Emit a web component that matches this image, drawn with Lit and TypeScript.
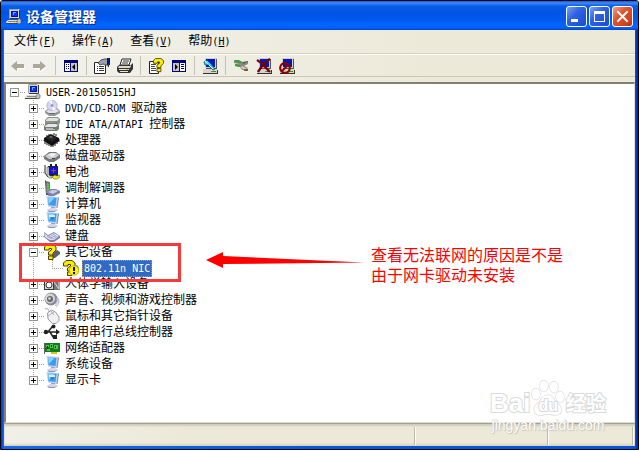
import { LitElement, html, svg, css, nothing, TemplateResult } from "lit";
import { customElement, property } from "lit/decorators.js";

const monitor = svg`
  <path d="M4 0h9l1 1v8l-1 1H4L3 9V1z" fill="#d9d6cc"/><path d="M3 1l1-1h8v1H4v8H3z" fill="#a5a196"/>
  <path d="M13 1h1v9H4v-1h9z" fill="#333"/><path d="M5 2h7v6H5z" fill="#0010a8"/><path d="M6 3h5v4H6z" fill="#1030ff"/>
  <path d="M7 3h3v1H8v2H7z" fill="#50b8ff"/>`;
const computer = svg`${monitor}
  <path d="M2 11h11l1 1v2H0v-1z" fill="#dedbd0"/><path d="M0 14h14v1H0z" fill="#444"/>
  <path d="M2 12h9v1H2z" fill="#888"/><path d="M13 9l2 2v3l-2 1-2-1v-2z" fill="#c4c1b8" stroke="#555" stroke-width=".6"/>`;
const scanBase = svg`
  <path d="M3 0h12v10H3z" fill="#d4d0c8"/><path d="M14 1h1v10H4v-1h10z" fill="#555"/><path d="M4 1h9v8H4z" fill="#0018c0"/>
  <path d="M1 11h13l1 1v3H1z" fill="#d8d5ca"/><path d="M1 15h15v1H1zM15 12h1v3h-1z" fill="#333"/><path d="M9 13h3v1H9z" fill="#777"/>
  <path d="M11 13h3v1h-3z" fill="#0a0"/>`;
const question = svg`
  <path d="M.5 6V3l2.500-2.500h6L12 3v3L9 9v2H4.500V8L7.500 6V4.500H5V6z" fill="#ffec00" stroke="#4a4300"/>
  <path d="M4.500 12h4.500v3.500H4.500z" fill="#ffec00" stroke="#4a4300"/>`;
const lcd = svg`
  <path d="M2.500 0L14 1l-1.500 11-8.500-1.500z" fill="#b5d2f2"/><path d="M4 1l8.500 1-1 8-7-1z" fill="#3c9cee"/><path d="M4 1l6.500.8L5 8z" fill="#8bd0fb"/>
  <path d="M14 1l1 1-1.500 10h-1z" fill="#7f82b8"/><path d="M7 11h4v2H7z" fill="#9ea0c8"/><path d="M3 14l3-2h5l3 2-4 2H5z" fill="#d4d5e6"/>
  <path d="M3 14l2 2h5l4-2-4 1H6z" fill="#8b8db3"/>`;

const icons: Record<string, TemplateResult> = {
  computer,
  back: svg`<path d="M2 8l6-5v3h7v4H8v3z" fill="#aca899"/><path d="M8 13v-3h7V9l1 1v1H9v3z" fill="#fff"/>`,
  forward: svg`<path d="M14 8L8 3v3H1v4h7v3z" fill="#aca899"/><path d="M15 8l-6 6-1-1V11H2v-1h6v3z" fill="#fff"/>`,
  treePane: svg`<path d="M1 2h14v12H1z" fill="#000080"/><path d="M2 5h5v8H2z" fill="#fff"/><path d="M8 5h6v8H8z" fill="#c8c5b8"/>
    <path d="M3 6h1v1H3zM3 8h1v1H3zM3 10h1v1H3zM5 6h1v1H5zM5 8h1v1H5zM5 10h1v1H5z" fill="#000080"/><path d="M12 6v6L9 9z" fill="#000"/>`,
  listPane: svg`<path d="M1 2h14v12H1z" fill="#000080"/><path d="M9 5h5v8H9z" fill="#fff"/><path d="M2 5h6v8H2z" fill="#c8c5b8"/>
    <path d="M10 6h3v1h-3zM10 8h3v1h-3zM10 10h3v1h-3z" fill="#000080"/><path d="M4 6v6l3-3z" fill="#000"/>`,
  properties: svg`<path d="M.5 4.500h11v11H.5z" fill="#fff" stroke="#222"/><path d="M3 8h1v1H3zM5 8h5v1H5zM3 10h1v1H3zM5 10h5v1H5zM3 12h1v1H3zM5 12h5v1H5z" fill="#333"/>
    <path d="M4 5l3-3 3-1h4v6h-3L9 6 6 7 5 6z" fill="#99a0aa" stroke="#333" stroke-width=".8"/><path d="M13 0h3v7h-3z" fill="#001a8c"/><path d="M13 6h2v3h-1z" fill="#334"/>`,
  printer: svg`<path d="M5 1h9l-2 6H3z" fill="#fff" stroke="#222"/><path d="M6 3h6M5 5h6" stroke="#333"/>
    <path d="M2 7h12l2-2v6l-3 4H2l-2-2V9z" fill="#333"/><path d="M2 8h11l1-1v1l-1 2H1z" fill="#ddd9cc"/><path d="M2 11h10v1H2zM3 13h8v1H3z" fill="#e8e5d8"/><path d="M9 11h2v1H9z" fill="#d8c800"/>`,
  help: svg`<path d="M1.500 3.500h9v12h-9z" fill="#fff" stroke="#222"/><path d="M3 6h5v1H3zM3 8h4v1H3zM3 10h5v1H3zM3 12h5v1H3z" fill="#444"/>
    <g transform="translate(5 0) scale(.88)">${question}</g>`,
  scan: svg`${scanBase}<path d="M2 4l3-2 4 4 4 5-2 1-5-5H3z" fill="#35d5f5" stroke="#033c64" stroke-width=".7"/><path d="M3 3l3 3M7 7l4 4" stroke="#d8ffff"/>`,
  update: svg`<path d="M1 3h7l2 2 5-1v2l-4 2 4 2-2 2H9L7 9 2 8V6h4L1 5z" fill="#888b80"/><path d="M1 2h5l3 2-1 1-6-1zM2 6l5 1v2L2 8z" fill="#36a23a"/>
    <path d="M9 8l5 3-1 1-5-2z" fill="#d5d3c9"/><path d="M11 11h4v2h-4z" fill="#8b5a2c"/><path d="M9 4l6-1v1l-5 2z" fill="#5c6055"/>`,
  uninstall: svg`${scanBase}<path d="M1 2c5 3 8 7 13 12M14 1C9 4 5 9 2 14" fill="none" stroke="#790000" stroke-width="2.400"/>`,
  disable: svg`${scanBase}<circle cx="6" cy="10" r="4.800" fill="none" stroke="#8c0000" stroke-width="2.200"/><path d="M9.500 6.500l-7 7" stroke="#8c0000" stroke-width="2.200"/>`,
  disc: svg`<path d="M1 11l4-3h8l3 3v2l-5 3H5l-4-3z" fill="#97989d"/><path d="M2 11l4-2h6l3 2-4 2H5z" fill="#e4e4e8"/>
    <circle cx="8" cy="5.500" r="5.200" fill="#d3d6f2" stroke="#a4a6c5" stroke-width=".7"/><path d="M8 5L5 1l3-1zM8 6l4 3-3 2z" fill="#fff"/><circle cx="8" cy="5.500" r="1.300" fill="#8a8db5"/><path d="M5 13h6v1H5z" fill="#666"/>`,
  ide: svg`<path d="M1 4l3-3h10l2 2v4l-2 2H2L1 8z" fill="#8f918d"/><path d="M2 4l3-2h8l2 1-2 2H2z" fill="#e1e3df"/><path d="M0 10l3-3h10l2 2v4l-2 2H2l-2-1z" fill="#777a76"/>
    <path d="M1 10l3-2h8l2 1-2 2H1z" fill="#e5e7e3"/><path d="M2 12h9v2H2z" fill="#b6b9b5"/><path d="M9 12h2v1H9zM11 6h2v1h-2z" fill="#3d9b42"/>`,
  chip: svg`<path d="M7 2l8 4v3l-7 5-8-5V6z" fill="#111"/><path d="M7 3l6 3-5 4-6-4z" fill="#262626"/><path d="M7 4l2 1-2 1-2-1z" fill="#777"/>
    <path d="M1 9v3M3 10v3M5 11v3M7 12v3M9 12v3M11 11v3M13 9v3M15 7v3M3 3v2M5 2v2M10 1v2M12 2v2" stroke="#111" stroke-width="1"/>`,
  disk: svg`<path d="M0 8l5-4h7l4 3v3l-6 4H5l-5-3z" fill="#77797a"/><path d="M1 8l5-3h6l3 2-5 4H5z" fill="#cbccce"/><path d="M4 7l4-2 4 1-3 3z" fill="#f2f2f4"/><path d="M8 10h3v1H8z" fill="#444"/>`,
  battery: svg`<path d="M1 1v8l3 4" fill="none" stroke="#222"/><path d="M4 2h2V0h2v2h3V0h2v2h1v10H5z" fill="#222"/><path d="M6 3h7v7H6z" fill="#0a14d8"/>
    <path d="M9 4h1v2h2v1h-2v2H9V7H7V6h2z" fill="#f22"/><path d="M3 3h2v8l3 2v1H5l-2-3z" fill="#ddd" stroke="#333" stroke-width=".5"/>
    <path d="M8 13l3-2 2 1 3-1v2l-3 2h-3z" fill="#f0ea28" stroke="#665f00" stroke-width=".6"/>`,
  modem: svg`<path d="M2 1l4 1v10l-4 1z" fill="#72767c"/><path d="M3 3l2 1v7l-2 1z" fill="#50c83c"/><path d="M2 12l5-3h5l4 2v2l-6 3H5l-3-2z" fill="#7e80a8"/>
    <path d="M4 12l4-2h4l2 1-5 3z" fill="#c7c8e4"/><path d="M1 1l1-1v13l3 2H2z" fill="#44484c"/>`,
  lcd,
  display: svg`${lcd}<path d="M5 3h6v2H5z" fill="#d9f2ff"/><path d="M6 5l4 1-2 2z" fill="#187dbb"/>`,
  keyboard: svg`<path d="M0 4l4 3 6-3 6 4v2l-6 4H6L0 9z" fill="#8082ad"/><path d="M0 5l4 3 6-3 5 3-5 4H6L1 9z" fill="#dedff0"/><path d="M5 8l5 3M7 7l5 3M3 8l5 3M9 6l4 3" stroke="#8f90b8" stroke-width=".8"/>`,
  unknown: svg`<path d="M8 9l5-3 3 2v2l-5 4H8z" fill="#5f6166"/>${question}`,
  warning: svg`<path d="M9 7l5-2 2 3v3l-7 4z" fill="#777"/>${question}<circle cx="11" cy="10.500" r="4.800" fill="#fff200" stroke="#b7a800" stroke-width=".7"/>
    <path d="M10 7h2v4h-2zM10 12h2v2h-2z" fill="#111"/>`,
  hid: svg`<path d="M0 3h10v11H0z" fill="#343638"/><path d="M1 4h8v9H1z" fill="#d8d9d6"/><circle cx="5" cy="9" r="3" fill="#fff" stroke="#333"/>
    <path d="M10 5h6v9h-6z" fill="#777"/><path d="M10 6l5 7M15 5v8" stroke="#ddd"/>`,
  speaker: svg`<circle cx="7" cy="7" r="6.500" fill="#898a8e"/><circle cx="6" cy="6.500" r="5" fill="#d3d4d8"/><circle cx="6" cy="7" r="3" fill="#66676d"/><circle cx="5.500" cy="6.500" r="1.300" fill="#dedee5"/>
    <path d="M12 6c2 3 1 6-1 8M14 6c2 4 0 7-2 9" fill="none" stroke="#a7a6df"/>`,
  mouse: svg`<path d="M1 1c3-1 4 1 4 3" fill="none" stroke="#9c9ca5"/><path d="M3.500 5l4-3 4 2 3.500 5v3.500L12 15.500H8.500L4 11z" fill="#f0f0f4" stroke="#8c8d96" stroke-width=".9"/><path d="M4 8l6-4M7 3l3 4" stroke="#9fa0aa" stroke-width=".8"/>`,
  usb: svg`<path d="M2 8h12M4 8l4-5h3M6 8l3 5h3" fill="none" stroke="#222" stroke-width="1.500"/><circle cx="2" cy="8" r="2.200" fill="#222"/><path d="M12 5l4 3-4 3z" fill="#222"/><circle cx="9.500" cy="2.500" r="2" fill="#222"/><path d="M9 11h4v4H9z" fill="#222"/>`,
  network: svg`<path d="M0 3h16v9H0z" fill="#147b1c"/><path d="M0 3h1v11H0z" fill="#666"/><path d="M2 5h3v2H2zM6 4h3v4H6zM10 5h4v4h-4zM3 9h3v2H3z" fill="#4ec24f"/><path d="M3 6h1v3H3zM7 5h1v2H7zM11 6h1v2h-1z" fill="#053f0b"/><path d="M7 12h6v2H7z" fill="#e0c21c"/>`,
};

const icon = (name: string) =>
  html`<svg class="icon" viewBox="0 0 16 16" width="16" height="16" aria-hidden="true">${icons[name]}</svg>`;

/** Wraps Latin runs so they take the half-width face. */
const mixed = (text: string) =>
  text
    .split(/([\x20-\x7e]+)/)
    .filter(Boolean)
    .map((run) => (/^[\x20-\x7e]/.test(run) ? html`<span class="latin">${run}</span>` : run));

interface Device {
  label: string;
  icon: string;
  open?: boolean;
  selected?: boolean;
  leaf?: boolean;
  children?: Device[];
}

const devices: Device = {
  label: "USER-20150515HJ",
  icon: "computer",
  open: true,
  children: [
    { label: "DVD/CD-ROM 驱动器", icon: "disc" },
    { label: "IDE ATA/ATAPI 控制器", icon: "ide" },
    { label: "处理器", icon: "chip" },
    { label: "磁盘驱动器", icon: "disk" },
    { label: "电池", icon: "battery" },
    { label: "调制解调器", icon: "modem" },
    { label: "计算机", icon: "lcd" },
    { label: "监视器", icon: "display" },
    { label: "键盘", icon: "keyboard" },
    {
      label: "其它设备",
      icon: "unknown",
      open: true,
      children: [{ label: "802.11n NIC", icon: "warning", selected: true, leaf: true }],
    },
    { label: "人体学输入设备", icon: "hid" },
    { label: "声音、视频和游戏控制器", icon: "speaker" },
    { label: "鼠标和其它指针设备", icon: "mouse" },
    { label: "通用串行总线控制器", icon: "usb" },
    { label: "网络适配器", icon: "network" },
    { label: "系统设备", icon: "lcd" },
    { label: "显示卡", icon: "display" },
  ],
};

const shared = css`
  * { box-sizing: border-box; }
  button { margin: 0; padding: 0; border: 0; background: none; font: inherit; color: inherit; }
  .icon { display: block; flex: none; width: 16px; height: 16px; }
  .latin { font-family: "DejaVu Sans Mono", monospace; font-size: 10px; white-space: pre; }
`;

@customElement("device-tree")
class DeviceTree extends LitElement {
  @property({ attribute: false }) root?: Device;

  static styles = [
    shared,
    css`
      :host { display: block; }
      ul { list-style: none; margin: 0; padding: 0; }
      ul ul { margin-left: 19px; }
      .node {
        background: repeating-linear-gradient(#a5a294 0 1px, transparent 1px 2px) 4px 0 / 1px 100% no-repeat;
      }
      .node:last-child { background-size: 1px 8px; }
      .node.top { background: none; }
      .row { display: flex; align-items: center; height: 16px; gap: 3px; }
      .lead { display: flex; }
      .joint {
        display: flex;
        align-items: center;
        width: 15px;
        height: 16px;
        background: repeating-linear-gradient(90deg, #a5a294 0 1px, transparent 1px 2px) 4px 8px / 11px 1px no-repeat;
      }
      .toggle {
        display: flex;
        align-items: center;
        justify-content: center;
        width: 9px;
        height: 9px;
        border: 1px solid #919b8c;
        background: #fff;
      }
      .toggle svg { display: block; }
      .label { padding: 0 2px; line-height: 16px; white-space: nowrap; }
      .selected { background: #316ac5; color: #fff; outline: 1px dotted #d8953a; outline-offset: -1px; }
    `,
  ];

  private node(d: Device, top = false): TemplateResult {
    return html`<li class="node ${top ? "top" : ""}" role="treeitem" aria-expanded=${d.leaf ? nothing : String(!!d.open)}>
      <div class="row">
        <div class="lead">
          <span class="joint">
            ${d.leaf
              ? nothing
              : html`<button class="toggle" aria-label=${d.label}>
                  <svg width="5" height="5" viewBox="0 0 5 5"><path d=${d.open ? "M0 2h5v1H0z" : "M0 2h5v1H0zM2 0h1v5H2z"} /></svg>
                </button>`}
          </span>
          ${icon(d.icon)}
        </div>
        <span class="label ${d.selected ? "selected" : ""}">${mixed(d.label)}</span>
      </div>
      ${d.children ? html`<ul role="group">${d.children.map((c) => this.node(c))}</ul>` : nothing}
    </li>`;
  }

  render() {
    return html`<ul role="tree">${this.root ? this.node(this.root, true) : nothing}</ul>`;
  }
}

const menus = [
  ["文件", "F"],
  ["操作", "A"],
  ["查看", "V"],
  ["帮助", "H"],
];

const tools: [string, string][][] = [
  [["back", "后退"], ["forward", "前进"]],
  [["treePane", "显示控制台树"]],
  [["properties", "属性"], ["printer", "打印"]],
  [["help", "帮助"], ["listPane", "显示操作窗格"]],
  [["scan", "扫描检测硬件改动"]],
  [["update", "更新驱动程序"], ["uninstall", "卸载"], ["disable", "停用"]],
];

@customElement("app-root")
class AppRoot extends LitElement {
  static styles = [
    shared,
    css`
      :host {
        display: flex;
        min-height: 100vh;
        box-sizing: border-box;
        padding: 0 1px 1px 0;
        background: #fff;
        font: 12px/16px "Liberation Sans", "Noto Sans CJK SC", sans-serif;
        color: #000;
      }
      .window {
        flex: 1;
        min-width: 0;
        display: flex;
        flex-direction: column;
        border: 1px solid #000;
        background: linear-gradient(90deg, #0831d9, #166aee 3px, #0855dd 50%, #0855dd calc(100% - 3px), #001ea0);
        padding: 0 3px 3px;
        border-radius: 3px 3px 0 0;
      }
      .title {
        display: flex;
        align-items: center;
        height: 29px;
        margin: 0 -3px;
        padding: 2px 5px 0;
        gap: 4px;
        background: linear-gradient(#0a5be0, #3c8cf8 2px, #0a5ce8 5px, #0054e3 12px, #0058ec 18px, #0066ff 24px, #0062f8 27px, #0040c8);
      }
      .title h1 {
        flex: 1;
        margin: 0;
        font: bold 14px/20px "Liberation Sans", "Noto Sans CJK SC", sans-serif;
        color: #fff;
        text-shadow: 1px 1px #0a2a80;
      }
      .controls { display: flex; gap: 2px; }
      .control {
        width: 21px;
        height: 21px;
        border: 1px solid #fff;
        border-radius: 3px;
        background: linear-gradient(135deg, #7ba2f5, #2f62e4 40%, #2357dc 70%, #1d4ccb);
      }
      .control svg { display: block; }
      .close { background: linear-gradient(135deg, #f0a08a, #e0522c 40%, #d8431c 70%, #b8330f); }
      .bar { background: linear-gradient(90deg, #f2f2ee, #ece9d8 70%); }
      .menu { display: flex; gap: 16px; height: 24px; padding: 3px 10px; border-bottom: 1px solid #d8d2bd; }
      .menu button { white-space: nowrap; }
      .tools { display: flex; height: 23px; padding: 0 2px; border-top: 1px solid #fff; border-bottom: 1px solid #cbc7b8; }
      .group { display: flex; align-items: center; }
      .group + .group::before { content: ""; width: 1px; height: 19px; margin: 0 4px 0 3px; background: #c5c2b2; }
      .tool { width: 23px; height: 21px; padding: 0 3px; }
      .gap { height: 5px; }
      .pane {
        position: relative;
        flex: 1;
        padding: 0 4px 24px;
        background: #fff;
        border: solid;
        border-width: 2px 1px 1px 2px;
        border-color: #85816f #e2dfd0 #e2dfd0 #85816f;
      }
      .frame { position: absolute; left: 13px; top: 159px; width: 162px; height: 39px; border: 3px solid #f53a3a; }
      .arrow { position: absolute; left: 200px; top: 166px; }
      .note { position: absolute; left: 365px; top: 162px; margin: 0; font-size: 16px; line-height: 20px; color: #f00; white-space: nowrap; }
      .status {
        display: grid;
        grid-template-columns: 410fr 133fr 85fr 3px;
        height: 23px;
        padding: 3px 0 1px;
        border-top: 1px solid #a39f90;
        background: linear-gradient(90deg, #f0f0e8, #ece9d8 30%);
        box-shadow: inset 0 2px 2px #d0ccbc, inset 0 -2px 2px #d8d4c0;
      }
      .status span + span { border-left: 1px solid #bdb9a9; box-shadow: inset 1px 0 #fff; }
      .mark { position: absolute; right: 28px; bottom: -12px; width: 116px; }
      .brand {
        display: flex;
        align-items: flex-end;
        justify-content: space-between;
        height: 36px;
        color: #fff;
        -webkit-text-stroke: 2px #dadada;
        paint-order: stroke fill;
        font: bold 26px/26px "Liberation Sans", sans-serif;
      }
      .paw { display: grid; justify-items: center; align-items: end; width: 34px; height: 36px; }
      .paw svg, .paw b { grid-area: 1 / 1; }
      .paw b { font-size: 16px; line-height: 20px; }
      .cjk { font: bold 20px/26px "Noto Sans CJK SC", sans-serif; }
      .site { display: block; font: 14px/18px "Liberation Sans", sans-serif; color: #fff; text-shadow: 0 0 1px #b5b2a8, 1px 1px 1px #ccc9bd; text-align: center; text-decoration: none; }
    `,
  ];

  render() {
    return html`
      <main class="window">
        <header class="title">
          ${icon("computer")}
          <h1>设备管理器</h1>
          <div class="controls">
            <button class="control" aria-label="最小化"><svg width="19" height="19"><path d="M4 12h7v3H4z" fill="#fff" /></svg></button>
            <button class="control" aria-label="最大化"><svg width="19" height="19"><path d="M4 4h11v11H4zM5 7v7h9V7z" fill="#fff" fill-rule="evenodd" /></svg></button>
            <button class="control close" aria-label="关闭"><svg width="19" height="19"><path d="M5 5l9 9M14 5l-9 9" stroke="#fff" stroke-width="2" stroke-linecap="square" /></svg></button>
          </div>
        </header>
        <nav class="bar menu">
          ${menus.map(([name, key]) => html`<button>${name}<span class="latin">(<u>${key}</u>)</span></button>`)}
        </nav>
        <div class="bar tools" role="toolbar">
          ${tools.map(
            (group) => html`<div class="group">
              ${group.map(([name, label]) => html`<button class="tool" aria-label=${label}>${icon(name)}</button>`)}
            </div>`
          )}
        </div>
        <div class="bar gap"></div>
        <section class="pane">
          <device-tree .root=${devices}></device-tree>
          <div class="frame"></div>
          <svg class="arrow" width="160" height="20" viewBox="0 0 160 20" aria-hidden="true">
            <path d="M0 10l17-8v4l141 6.500-141 1.500v4z" fill="#f00" />
          </svg>
          <p class="note">查看无法联网的原因是不是<br />由于网卡驱动未安装</p>
          <div class="mark">
            <div class="brand">
              <span>Bai</span>
              <span class="paw">
                <svg width="34" height="36" viewBox="0 0 34 36" aria-hidden="true">
                  <g fill="#fff" stroke="#dedede" stroke-width="1.500">
                    <ellipse cx="5" cy="14" rx="4" ry="5.500" /><ellipse cx="13" cy="6" rx="4" ry="5.500" />
                    <ellipse cx="23" cy="7" rx="4" ry="5.500" /><ellipse cx="29" cy="17" rx="4" ry="5.500" />
                    <path d="M17 15c5 0 6 6 10 9 5 4 4 11-2 11-4 0-5-1-8-1s-4 1-8 1c-6 0-8-7-3-11 4-3 6-9 11-9z" />
                  </g>
                </svg>
                <b>du</b>
              </span>
              <span class="cjk">经验</span>
            </div>
            <a class="site" href="#">jingyan.baidu.com</a>
          </div>
        </section>
        <footer class="status"><span></span><span></span><span></span><span></span></footer>
      </main>
    `;
  }
}
